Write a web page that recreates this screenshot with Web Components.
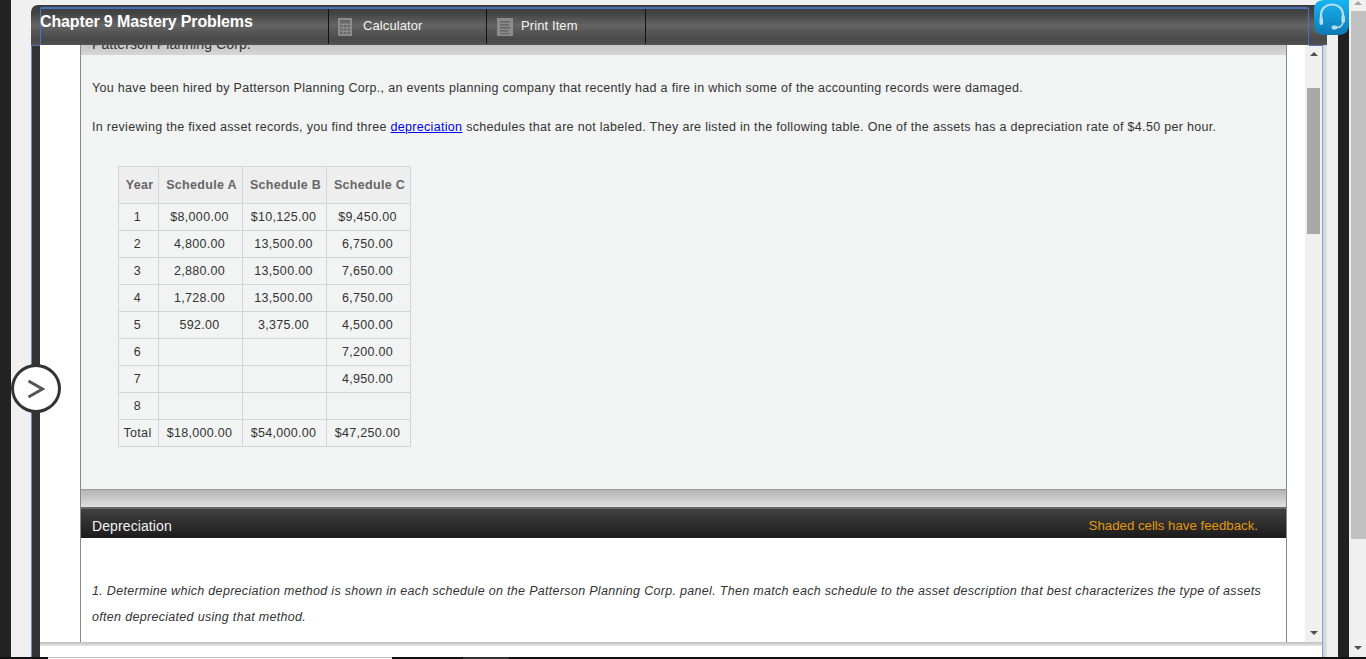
<!DOCTYPE html>
<html>
<head>
<meta charset="utf-8">
<title>Chapter 9 Mastery Problems</title>
<style>
  html, body { margin: 0; height: 100%; overflow: hidden; background: #f0f0f0; }
  body { font-family: "Liberation Sans", Arial, sans-serif; }
</style>
</head>
<body>

<app-shell>
  <title-bar slot="title" heading="Chapter 9 Mastery Problems">
    <tool-button icon="calc" label="Calculator"></tool-button>
    <tool-button icon="print" label="Print Item"></tool-button>
  </title-bar>

  <doc-panel heading="Patterson Planning Corp.">
    <p>You have been hired by Patterson Planning Corp., an events planning company that recently had a fire in which some of the accounting records were damaged.</p>
    <p>In reviewing the fixed asset records, you find three <a href="#">depreciation</a> schedules that are not labeled. They are listed in the following table. One of the assets has a depreciation rate of $4.50 per hour.</p>
    <schedule-table></schedule-table>
  </doc-panel>

  <section-bar heading="Depreciation" note="Shaded cells have feedback."></section-bar>

  <question-text>1. Determine which depreciation method is shown in each schedule on the Patterson Planning Corp. panel. Then match each schedule to the asset description that best characterizes the type of assets often depreciated using that method.</question-text>
</app-shell>

<script>
class AppShell extends HTMLElement {
  constructor() {
    super();
    this.attachShadow({ mode: "open" });
    this.shadowRoot.innerHTML = `
      <style>
        :host { display: block; height: 659px; position: relative; overflow: hidden; }
        #top { display: flex; height: 657px; }
        #edge { width: 11px; background: #222; }
        #desk { flex: 1; padding: 5px 11px 0 20px; background: #f0f0f0; min-width: 0; display: flex; }
        #strip { width: 11px; background: #222; }
        #window { flex: 1; min-width: 0; display: flex; flex-direction: column; }
        #frame {
          flex: 1; min-height: 0; display: flex; position: relative;
          background: #333; box-shadow: inset 1px 0 0 #5f8ce0;
        }
        #frame-in {
          flex: 1; min-width: 0; display: flex; flex-direction: column;
          margin-left: 9px; position: relative;
        }
        #blue {
          flex: 1; min-height: 0; display: flex;
          border-right: 1px solid #7fa4e6; background: #fff;
        }
        #scroll { flex: 1; min-width: 0; padding-left: 40px; padding-right: 35px; display: flex; flex-direction: column; height: 597px; overflow: hidden; }
        #column { flex: 1; min-height: 0; border-left: 1px solid #888; border-right: 1px solid #888; overflow: hidden; background: #fff; }
        #right-fade { width: 4px; background: linear-gradient(90deg, #cfcfcf, #e2e2e2); }
        #foot {
          position: absolute; left: 0; right: 1px; bottom: 0; height: 15px;
          background: linear-gradient(#bdbdbd 0, #e8e8e8 4px, #fff 4px);
        }
        #notch-l { position: absolute; left: 0; top: 0; width: 9px; height: 1px; background: #4a71c0; }
        #notch-r { position: absolute; right: 0; top: 0; width: 14px; height: 1px; background: #4a71c0; }
        #bottom { height: 2px; background: #111; display: flex; }
        #bottom i { display: block; margin-left: 48px; width: 344px; background: #fff; border-top: 1px solid #bbb; }
        #bottom i + i { margin-left: 71px; width: 46px; background: #333; border: 0; }
        #headset { position: absolute; left: 1314px; top: 0; }
        #open {
          position: absolute; left: 11px; top: 364px; width: 44px; height: 43px;
          border: 3px solid #333; border-radius: 50%; background: #fff;
          display: flex; align-items: center; justify-content: center;
        }
      </style>
      <div id="top">
        <div id="edge"></div>
        <div id="desk">
          <div id="window">
            <slot name="title"></slot>
            <div id="frame">
              <div id="notch-l"></div>
              <div id="frame-in">
                <div id="blue">
                  <div id="scroll"><div id="column"><slot></slot></div></div>
                </div>
                <div id="foot"></div>
                <v-scroll style="position:absolute;right:1px;top:0;height:597px" thumb-top="43" thumb-height="146"></v-scroll>
                <div id="notch-r"></div>
              </div>
              <div id="right-fade"></div>
            </div>
          </div>
        </div>
        <div id="strip"></div>
        <v-scroll wide thumb-top="11" thumb-height="528"></v-scroll>
      </div>
      <div id="bottom"><i></i><i></i></div>
      <svg id="headset" width="35" height="35" viewBox="0 0 35 35">
        <defs><linearGradient id="hs" x1="0" y1="0" x2="0" y2="1"><stop offset="0" stop-color="#15b5f2"/><stop offset="1" stop-color="#0f78b4"/></linearGradient></defs>
        <path d="M10 0H35V24Q35 35 24 35H11Q0 35 0 24V10Q0 0 10 0Z" fill="url(#hs)"/>
        <path d="M7 21V15C7 1 29 1 29 15V21" fill="none" stroke="#b8dcec" stroke-width="2.2"/>
        <rect x="5.5" y="17" width="3.5" height="8" rx="1.7" fill="#b8dcec"/>
        <rect x="27.5" y="15" width="3.5" height="8" rx="1.7" fill="#b8dcec"/>
        <path d="M29 22Q28 27.5 23 27.5" fill="none" stroke="#b8dcec" stroke-width="1.4"/>
        <rect x="17.5" y="25.5" width="6" height="4" rx="2" fill="#b8dcec"/>
      </svg>
      <div id="open">
        <svg width="18" height="20" viewBox="0 0 18 20"><path d="M1.5 2L15.5 10L1.5 18" fill="none" stroke="#555" stroke-width="3"/></svg>
      </div>
    `;
  }
}

class VScroll extends HTMLElement {
  connectedCallback() {
    let wide = this.hasAttribute("wide");
    let top = this.getAttribute("thumb-top");
    let h = this.getAttribute("thumb-height");
    this.attachShadow({ mode: "open" });
    this.shadowRoot.innerHTML = `
      <style>
        :host { display: block; width: 17px; background: #f0f0f0; position: relative; }
        #thumb { position: absolute; top: ${top}px; height: ${h}px; left: 2px; right: ${wide ? 0 : 2}px; background: ${wide ? "#c1c1c1" : "#a8a8a8"}; }
        .arrow { position: absolute; left: 5px; width: 0; height: 0; border-left: 4px solid transparent; border-right: 4px solid transparent; }
        #up { top: ${wide ? 1 : 7}px; border-bottom: 4px solid ${wide ? "#a3a3a3" : "#505050"}; }
        #down { bottom: 7px; border-top: 4px solid #505050; }
      </style>
      <div class="arrow" id="up"></div>
      <div id="thumb"></div>
      <div class="arrow" id="down"></div>
    `;
  }
}

class TitleBar extends HTMLElement {
  connectedCallback() {
    this.attachShadow({ mode: "open" });
    this.shadowRoot.innerHTML = `
      <style>
        :host {
          display: block; height: 40px; box-sizing: border-box; padding: 2px 18px 0 9px;
          border-radius: 7px 7px 0 0;
          background:
            repeating-linear-gradient(rgba(0,0,0,.05) 0 1px, transparent 1px 2px),
            linear-gradient(#3d3d3d 0, #444 8px, #666 20px, #4a4a4a 35px, #555 40px);
          position: relative;
        }
        #in {
          display: flex; height: 38px; box-sizing: border-box;
          border: solid #4a71c0; border-width: 2px 1px 0 1px;
          border-radius: 2px 2px 0 0;
        }
        h1 {
          margin: 0; width: 288px; flex: none; font-size: 16px; font-weight: bold; color: #fff; line-height: 25px;
          letter-spacing: -0.13px; margin-left: -1px; box-sizing: border-box;
        }
        ::slotted(tool-button) { flex: none; }
      </style>
      <div id="in">
        <h1>${this.getAttribute("heading")}</h1>
        <slot></slot>
      </div>
    `;
  }
}

class ToolButton extends HTMLElement {
  connectedCallback() {
    let icons = {
      calc: `<svg width="14" height="18" viewBox="0 0 14 18"><rect width="14" height="18" fill="#8b8b8b"/><rect x="2" y="2" width="10" height="3.5" fill="#666"/><g fill="#666"><rect x="2" y="7" width="2.5" height="2"/><rect x="5.8" y="7" width="2.5" height="2"/><rect x="9.5" y="7" width="2.5" height="2"/><rect x="2" y="10.5" width="2.5" height="2"/><rect x="5.8" y="10.5" width="2.5" height="2"/><rect x="9.5" y="10.5" width="2.5" height="2"/><rect x="2" y="14" width="2.5" height="2"/><rect x="5.8" y="14" width="2.5" height="2"/><rect x="9.5" y="14" width="2.5" height="2"/></g></svg>`,
      print: `<svg width="16" height="18" viewBox="0 0 16 18"><rect width="16" height="18" fill="#8b8b8b"/><g fill="#666"><rect x="3" y="3" width="10" height="1.6"/><rect x="3" y="6" width="9" height="1.6"/><rect x="3" y="9" width="10" height="1.6"/><rect x="3" y="12" width="8" height="1.6"/><rect x="3" y="15" width="10" height="1.2"/></g></svg>`
    };
    this.attachShadow({ mode: "open" });
    this.shadowRoot.innerHTML = `
      <style>
        :host {
          display: flex; align-items: center; box-sizing: border-box; width: 158px; height: 35px;
          border-left: 1px solid #111; padding-left: 9px; gap: 11px;
          color: #f2f2f2; font-size: 13px; letter-spacing: 0.1px; font-weight: normal;
        }
        :host([icon="print"]) { border-right: 1px solid #111; width: 160px; padding-left: 10px; gap: 8px; }
        svg { display: block; }
        span { margin-bottom: 2px; }
      </style>
      ${icons[this.getAttribute("icon")]}<span>${this.getAttribute("label")}</span>
    `;
  }
}

class DocPanel extends HTMLElement {
  connectedCallback() {
    this.attachShadow({ mode: "open" });
    this.shadowRoot.innerHTML = `
      <style>
        :host { display: block; background: #f2f4f3; height: 462px; overflow: hidden; }
        #cap {
          height: 10px; overflow: hidden; padding-left: 11px;
          background: linear-gradient(#c6c6c6, #d6d6d6);
          color: #333; font-size: 14px; letter-spacing: 0.1px;
        }
        #cap span { display: block; margin-top: -9px; line-height: 16px; }
        #body { height: 435px; box-sizing: border-box; padding: 0 11px; border-bottom: 1px solid #999; color: #333; font-size: 12.5px; letter-spacing: 0.31px; }
        ::slotted(p) { margin: 0; line-height: 16px; }
        ::slotted(p:first-of-type) { padding-top: 25px; }
        ::slotted(p:nth-of-type(2)) { padding-top: 23px; }
        #grip { height: 17px; background: linear-gradient(#b4b4b4, #e0e0e0); }
      </style>
      <div id="cap"><span>${this.getAttribute("heading")}</span></div>
      <div id="body"><slot></slot></div>
      <div id="grip"></div>
    `;
  }
}

class ScheduleTable extends HTMLElement {
  connectedCallback() {
    let rows = [
      ["1", "$8,000.00", "$10,125.00", "$9,450.00"],
      ["2", "4,800.00", "13,500.00", "6,750.00"],
      ["3", "2,880.00", "13,500.00", "7,650.00"],
      ["4", "1,728.00", "13,500.00", "6,750.00"],
      ["5", "592.00", "3,375.00", "4,500.00"],
      ["6", "", "", "7,200.00"],
      ["7", "", "", "4,950.00"],
      ["8", "", "", ""],
      ["Total", "$18,000.00", "$54,000.00", "$47,250.00"]
    ];
    let body = rows.map(r => "<tr>" + r.map(c => `<td>${c}</td>`).join("") + "</tr>").join("");
    this.attachShadow({ mode: "open" });
    this.shadowRoot.innerHTML = `
      <style>
        :host { display: block; margin: 31px 0 0 26px; }
        table { border-collapse: collapse; table-layout: fixed; width: 292px; color: #333; font-size: 12.5px; letter-spacing: 0.31px; }
        th, td { border: 1px solid #d2d6d6; text-align: center; padding: 0; }
        th { height: 36px; background: #eeeeee; color: #666; font-weight: bold; padding-left: 2px; }
        td { height: 26px; padding-right: 2px; }
      </style>
      <table>
        <colgroup><col style="width:40px"><col style="width:84px"><col style="width:84px"><col style="width:84px"></colgroup>
        <tr><th>Year</th><th>Schedule A</th><th>Schedule B</th><th>Schedule C</th></tr>
        ${body}
      </table>
    `;
  }
}

class SectionBar extends HTMLElement {
  connectedCallback() {
    this.attachShadow({ mode: "open" });
    this.shadowRoot.innerHTML = `
      <style>
        :host {
          display: flex; justify-content: space-between; align-items: center; box-sizing: border-box;
          height: 31px; padding: 4px 28px 0 11px; border-top: 2px solid #666;
          background: linear-gradient(#414141, #1b1b1b); background-clip: padding-box;
          font-size: 14px; letter-spacing: 0.1px;
        }
        b { font-weight: normal; color: #f2f2f2; }
        span { color: #e39a0c; font-size: 13.25px; letter-spacing: 0; }
      </style>
      <b>${this.getAttribute("heading")}</b><span>${this.getAttribute("note")}</span>
    `;
  }
}

class QuestionText extends HTMLElement {
  constructor() {
    super();
    this.attachShadow({ mode: "open" });
    this.shadowRoot.innerHTML = `
      <style>
        :host {
          display: block; padding: 40px 11px 0; background: #fff; color: #333;
          font-size: 12.5px; font-style: italic; line-height: 26px; letter-spacing: 0.31px;
        }
      </style>
      <slot></slot>
    `;
  }
}

customElements.define("app-shell", AppShell);
customElements.define("v-scroll", VScroll);
customElements.define("title-bar", TitleBar);
customElements.define("tool-button", ToolButton);
customElements.define("doc-panel", DocPanel);
customElements.define("schedule-table", ScheduleTable);
customElements.define("section-bar", SectionBar);
customElements.define("question-text", QuestionText);
</script>
</body>
</html>
